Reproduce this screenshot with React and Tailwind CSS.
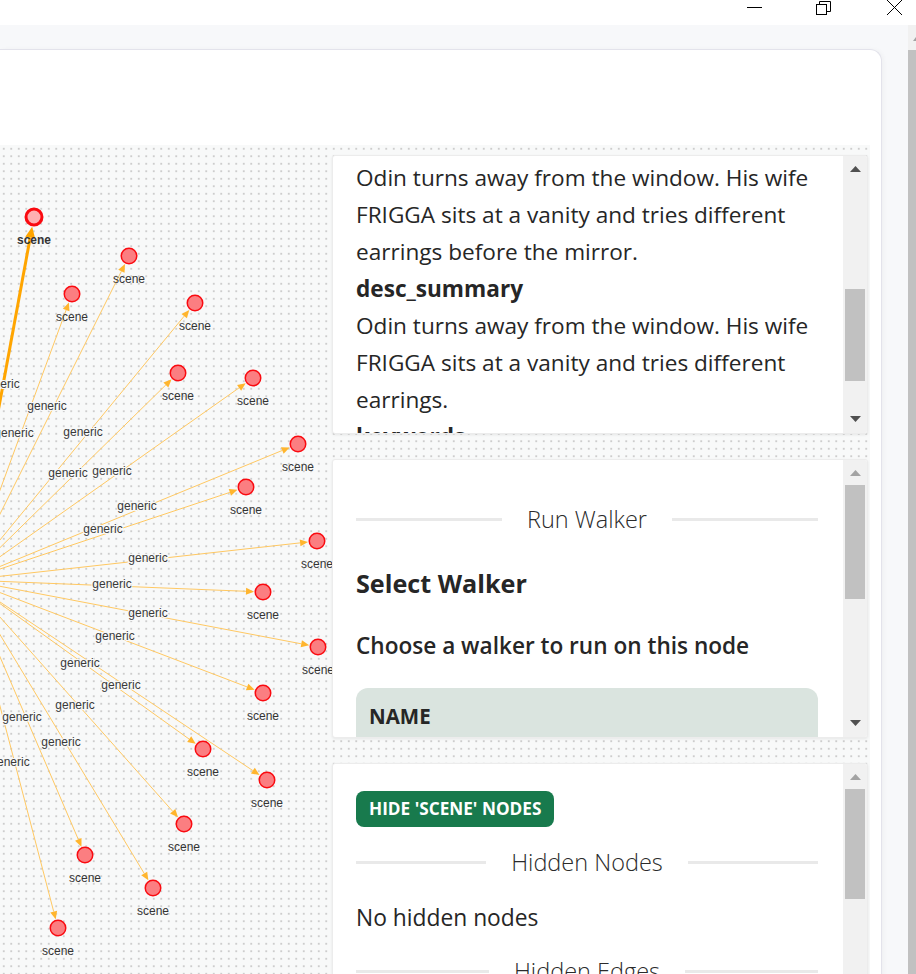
import React from "react";

const S = [-33, 580];
const NODES = [
  [34, 217, true],
  [129, 256],
  [72, 294],
  [195, 303],
  [178, 373],
  [253, 378],
  [298, 444],
  [246, 487],
  [317, 541],
  [263, 592],
  [318, 647],
  [263, 693],
  [203, 749],
  [267, 780],
  [184, 824],
  [85, 855],
  [153, 888],
  [58, 928],
];
const LABELS = [
  [0, 384], [47, 406], [14, 433], [83, 432], [68, 473], [112, 471], [137, 506],
  [103, 529], [148, 558], [112, 584], [148, 613], [115, 636], [80, 663], [121, 685],
  [75, 705], [22, 717], [61, 742], [10, 762],
];

function arrowGeom(x1, y1, x2, y2, r, len, w) {
  const dx = x2 - x1;
  const dy = y2 - y1;
  const d = Math.hypot(dx, dy);
  const ux = dx / d;
  const uy = dy / d;
  const tx = x2 - ux * r;
  const ty = y2 - uy * r;
  const bx = tx - ux * len;
  const by = ty - uy * len;
  const px = -uy;
  const py = ux;
  return {
    bx,
    by,
    pts: `${tx},${ty} ${bx + px * w},${by + py * w} ${bx - px * w},${by - py * w}`,
  };
}

function Graph() {
  const font = "'Liberation Sans', Arial, sans-serif";
  return (
    <svg className="absolute inset-0 h-full w-full" xmlns="http://www.w3.org/2000/svg">
      <g transform="translate(0,-145)">
        {NODES.map(([x, y, sel], i) => {
          const a = sel
            ? arrowGeom(S[0], S[1], x, y, 10, 11, 5)
            : arrowGeom(S[0], S[1], x, y, 9, 8, 3.5);
          return (
            <g key={"e" + i}>
              <line
                x1={S[0]}
                y1={S[1]}
                x2={a.bx}
                y2={a.by}
                stroke={sel ? "#FFA500" : "#FFC862"}
                strokeWidth={sel ? 3 : 1}
              />
              <polygon points={a.pts} fill={sel ? "#FFA500" : "#FFB52E"} />
            </g>
          );
        })}
        {LABELS.map(([x, y], i) => (
          <text
            key={"l" + i}
            x={x}
            y={y + 4}
            textAnchor="middle"
            fontFamily={font}
            fontSize="12"
            fill="#3a3a3a"
            stroke="#f8f9f9"
            strokeWidth="2"
            paintOrder="stroke"
          >
            generic
          </text>
        ))}
        {NODES.map(([x, y, sel], i) => (
          <g key={"n" + i}>
            <circle
              cx={x}
              cy={y}
              r={sel ? 8 : 7.75}
              fill={sel ? "#FFAFB1" : "#FB7E81"}
              stroke="#FA0A10"
              strokeWidth={sel ? 3 : 1.5}
            />
            <text
              x={x}
              y={y + 27}
              textAnchor="middle"
              fontFamily={font}
              fontSize="12"
              fontWeight={sel ? 700 : 400}
              fill="#343434"
            >
              scene
            </text>
          </g>
        ))}
      </g>
    </svg>
  );
}

function Arrow({ up, dark }) {
  return (
    <svg width="11" height="6" viewBox="0 0 11 6">
      <polygon
        points={up ? "0,6 11,6 5.5,0" : "0,0 11,0 5.5,6"}
        fill={dark ? "#505050" : "#a3a3a3"}
      />
    </svg>
  );
}

function ScrollBar({ thumbTop, thumbH, upDark }) {
  return (
    <div className="flex w-[24px] shrink-0 flex-col bg-[#f1f1f1] pb-[2px]">
      <div className="flex h-[25px] items-center justify-center">
        <Arrow up dark={upDark} />
      </div>
      <div className="flex-1">
        <div className="mx-[2px] bg-[#c1c1c1]" style={{ marginTop: thumbTop, height: thumbH }} />
      </div>
      <div className="flex h-[25px] items-center justify-center">
        <Arrow dark />
      </div>
    </div>
  );
}

function Divider({ children }) {
  return (
    <div className="flex h-[37px] items-center">
      <div className="h-[3px] flex-1 bg-[#e9e9e9]" />
      <div className="mx-[25px] text-[23.5px] font-light leading-[37px] text-[#2b2b2b]">{children}</div>
      <div className="h-[3px] flex-1 bg-[#e9e9e9]" />
    </div>
  );
}

function Panel({ children, thumbTop, thumbH, upDark }) {
  return (
    <div className="mr-[2px] flex h-[279px] w-[536px] shrink-0 overflow-hidden rounded-[3px] border border-[#ececec] bg-white shadow-[0_1px_3px_rgba(0,0,0,0.08)]">
      <div className="flex-1 overflow-hidden pl-[23px] pr-[25px] text-[#262626]">{children}</div>
      <ScrollBar thumbTop={thumbTop} thumbH={thumbH} upDark={upDark} />
    </div>
  );
}

export default function App() {
  return (
    <div className="flex h-[974px] flex-col overflow-hidden bg-[#f7f8fa] font-['Open_Sans',sans-serif]">
      {/* title bar */}
      <div className="relative h-[25px] shrink-0 bg-white">
        <svg className="absolute right-0 top-0" width="916" height="25" viewBox="0 0 916 25">
          <line x1="747" y1="7.5" x2="762" y2="7.5" stroke="#000" strokeWidth="1" />
          <rect x="816.5" y="4.5" width="10" height="10" fill="none" stroke="#000" strokeWidth="1" />
          <path d="M819.5 4.5 V1.5 H830.5 V11.5 H826.5" fill="none" stroke="#000" strokeWidth="1" />
          <line x1="887" y1="0" x2="902" y2="15" stroke="#000" strokeWidth="1" />
          <line x1="902" y1="0" x2="887" y2="15" stroke="#000" strokeWidth="1" />
        </svg>
      </div>

      <div className="flex min-h-0 flex-1">
        <div className="flex min-w-0 flex-1 flex-col pt-[24px]">
          <div className="mr-[26px] flex flex-1 flex-col rounded-tr-[12px] border-r border-t border-[#e3e3eb] bg-white shadow-[2px_0_4px_rgba(0,0,0,0.03)]">
            <div className="h-[95px] shrink-0" />
            <div className="relative min-h-0 flex-1 pr-[11px]">
              <div className="relative h-full overflow-hidden bg-[#f8f9f9] bg-[radial-gradient(circle,#cdcdcd_0.8px,transparent_1.2px)] bg-[length:7.5px_7.5px] bg-size-[7.5px_7.5px]">
                <Graph />
                <div className="relative flex flex-col items-end gap-[25px] pt-[10px]">
                  <Panel thumbTop={108} thumbH={92} upDark>
                    <div className="pt-[3px] text-[22.6px] leading-[37px]">
                      <div>
                        Odin turns away from the window. His wife FRIGGA sits at a vanity and tries different
                        earrings before the mirror.
                      </div>
                      <div className="font-bold">desc_summary</div>
                      <div>
                        Odin turns away from the window. His wife FRIGGA sits at a vanity and tries different
                        earrings.
                      </div>
                      <div className="font-bold">keywords</div>
                    </div>
                  </Panel>
                  <Panel thumbTop={0} thumbH={114}>
                    <div className="pt-[41px]">
                      <Divider>Run Walker</Divider>
                      <div className="mt-[27px] text-[25.2px] font-bold leading-[36px]">Select Walker</div>
                      <div className="mt-[26px] text-[22.6px] font-semibold leading-[37px]">
                        Choose a walker to run on this node
                      </div>
                      <div className="mt-[24px] h-[80px] rounded-t-[12px] bg-[#dae4df] px-[13px] pt-[14px]">
                        <div className="text-[20.5px] font-bold leading-[28px]">NAME</div>
                      </div>
                    </div>
                  </Panel>
                  <Panel thumbTop={0} thumbH={110}>
                    <div className="pt-[27px]">
                      <div className="inline-flex h-[36px] items-center rounded-[8px] bg-[#187a4d] px-[13px] text-[17.2px] font-bold text-white">
                        HIDE 'SCENE' NODES
                      </div>
                      <div className="mt-[17px]">
                        <Divider>Hidden Nodes</Divider>
                      </div>
                      <div className="mt-[18px] text-[22.8px] leading-[37px]">No hidden nodes</div>
                      <div className="mt-[17px]">
                        <Divider>Hidden Edges</Divider>
                      </div>
                    </div>
                  </Panel>
                </div>
              </div>
            </div>
          </div>
        </div>
        {/* page scrollbar */}
        <div className="flex w-[8px] shrink-0 flex-col bg-[#f1f1f1]">
          <div className="flex h-[25px] items-center justify-end">
            <svg width="3" height="6" viewBox="0 0 3 6">
              <polygon points="0,6 3,6 3,2" fill="#a3a3a3" />
            </svg>
          </div>
          <div className="flex-1 bg-[#c1c1c1]" />
        </div>
      </div>
    </div>
  );
}
